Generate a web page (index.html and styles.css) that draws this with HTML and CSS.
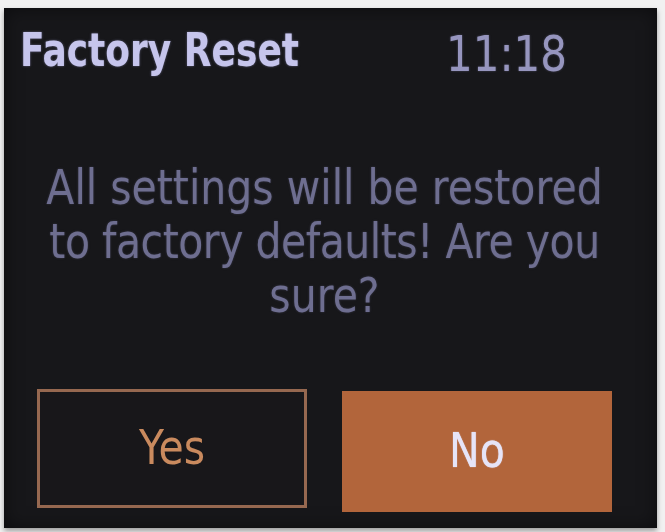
FILE: index.html
```html
<!DOCTYPE html>
<html lang="en">
<head>
<meta charset="utf-8">
<title>Factory Reset</title>
<link rel="stylesheet" href="styles.css">
</head>
<body>
  <div class="screen">
    <header class="header">
      <h1 class="title">Factory Reset</h1>
      <span class="clock">11:18</span>
    </header>
    <p class="message"><span class="line">All settings will be restored</span><br><span class="line line-tight">to factory defaults! Are you</span><br><span class="line">sure?</span></p>
    <div class="actions">
      <button class="btn btn-yes"><span class="btn-label">Yes</span></button>
      <button class="btn btn-no"><span class="btn-label">No</span></button>
    </div>
  </div>
</body>
</html>
```

FILE: styles.css
```css
html, body {
  margin: 0;
  padding: 0;
}

body {
  width: 665px;
  height: 532px;
  background: #f1f1f1;
  font-family: "DejaVu Sans", "Verdana", sans-serif;
  overflow: hidden;
}

.screen {
  margin: 8px 8px 0 4px;
  width: 653px;
  box-sizing: border-box;
  padding: 25px 0 16px 0;
  background: #17171a;
  box-shadow: 0 3px 5px rgba(0, 0, 0, 0.35), inset 0 0 18px rgba(0, 0, 0, 0.5);
  display: flex;
  flex-direction: column;
  filter: blur(0.4px);
}

.header {
  display: flex;
  align-items: flex-start;
  gap: 147px;
  padding-left: 16px;
  height: 42px;
}

.title {
  margin: 0;
  font-size: 36px;
  line-height: 36px;
  font-weight: bold;
  color: #c6c5ec;
  transform: scaleY(1.28);
  text-shadow: 0 0 2px rgba(180, 180, 240, 0.5);
  white-space: nowrap;
}

.clock {
  display: inline-block;
  font-size: 42px;
  line-height: 42px;
  color: #9695be;
  transform: scaleY(1.2);
  text-shadow: 0 0 2px rgba(150, 150, 200, 0.4);
  white-space: nowrap;
}

.message {
  margin: 86px 12px 0 0;
  font-size: 41px;
  line-height: 46px;
  text-align: center;
  color: #6e6e90;
  transform: scaleY(1.17);
  transform-origin: top center;
  white-space: nowrap;
  text-shadow: 0 0 2px rgba(110, 110, 150, 0.4);
}

.line-tight {
  letter-spacing: -0.5px;
}

.actions {
  display: flex;
  gap: 35px;
  padding-left: 33px;
  margin-top: 90px;
}

.btn {
  width: 270px;
  height: 119px;
  box-sizing: border-box;
  display: flex;
  align-items: center;
  justify-content: center;
  padding: 0;
  font-family: "DejaVu Sans", "Verdana", sans-serif;
  font-size: 41px;
  line-height: 41px;
  cursor: pointer;
}

.btn-label {
  display: inline-block;
  transform: scaleY(1.17);
}

.btn-yes {
  background: #18171a;
  border: 3px solid #966850;
  color: #c98a5e;
}

.btn-no {
  background: #b2653b;
  border: 0;
  color: #e6e4f7;
  margin-top: 2px;
  height: 121px;
  text-shadow: 0 0 1px #e6e4f7;
}
```
